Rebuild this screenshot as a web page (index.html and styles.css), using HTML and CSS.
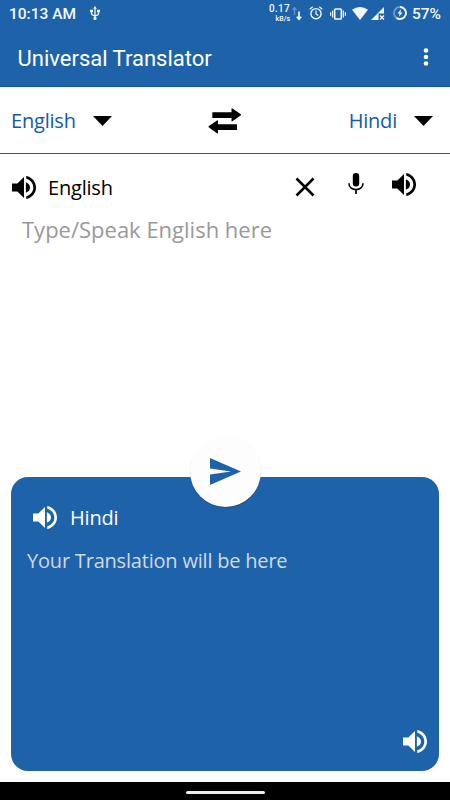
FILE: index.html
```
<!DOCTYPE html>
<html lang="en">
  <head>
    <meta charset="UTF-8" />
    <meta name="viewport" content="width=device-width, initial-scale=1.0" />
    <title>Universal Translator</title>
    <link rel="stylesheet" href="styles.css">
  </head>

  <body>
    <svg class="defs" width="0" height="0">
      <symbol id="speaker" viewBox="3 3.23 18 17.54" preserveAspectRatio="none">
        <path d="M3 9v6h4l5 5V4L7 9H3zm13.500 3c0-1.770-1.020-3.290-3.100-4.030v8.050c2.080-.73 3.100-2.250 3.100-4.020zM13.700 3.230v2.060c3.190.86 5.300 3.540 5.300 6.710s-2.110 5.850-5.300 6.710v2.060c4.310-.91 7.300-4.490 7.300-8.770s-2.990-7.860-7.300-8.770z" />
      </symbol>
    </svg>

    <div class="status-bar">
      <span class="time">10:13 AM</span>
      <svg class="usb" width="10" height="14" viewBox="0 0 10 14">
        <path class="line" d="M5 2v10M1.500 5v2.500q0 1.500 3.500 2.500M8.500 5v2.500q0 1.500-3.500 2.500" stroke="currentColor" stroke-width="1.300" />
        <path d="M5 0l1.800 2.700H3.200zM0 3.800h3v2.500H0zM7 3.800h3v2.500H7z" />
        <circle cx="5" cy="12.400" r="1.600" />
      </svg>
      <div class="speed">
        <span>0.17</span>
        <span class="unit">kB/s</span>
      </div>
      <svg class="arrows" width="10" height="16" viewBox="0 0 10 16">
        <path class="line" d="M2.500 9V2M.5 4l2-2.300 2 2.300" stroke="#5f8fc4" stroke-width="1.500" />
        <path class="line" d="M7 5.500v7M4.800 10.800l2.200 2.400 2.200-2.400" stroke="currentColor" stroke-width="1.700" />
      </svg>
      <svg class="alarm line" width="14" height="14" viewBox="0 0 14 14" stroke="currentColor">
        <circle cx="7" cy="7.700" r="5.100" stroke-width="1.400" />
        <path d="M7 4.500v3.500l2.300 1.400M.7 3.300L3.700.8M13.300 3.300l-3-2.500" stroke-width="1.200" />
      </svg>
      <svg class="vibrate line" width="16" height="12" viewBox="0 0 16 12" stroke="currentColor">
        <rect x="4.700" y="1" width="6.600" height="10" rx=".8" stroke-width="1.500" />
        <path d="M2.700 2.500v7M13.300 2.500v7M.6 4.300v3.400M15.400 4.300v3.400" stroke-width="1.200" />
      </svg>
      <svg class="wifi" width="16" height="13" viewBox="0 0 16 13">
        <path d="M0 2.800Q8-2.600 16 2.800L8 13z" />
      </svg>
      <svg class="signal" width="14" height="14" viewBox="0 0 14 14">
        <path d="M13 0v6.500H7.500V13H0z" />
        <path d="M9 8.500l4 4M13 8.500l-4 4" stroke="currentColor" stroke-width="1.400" />
      </svg>
      <svg class="battery" width="14" height="14" viewBox="0 0 14 14">
        <circle class="line" cx="7" cy="7" r="6" stroke="#6f9aca" stroke-width="1.800" />
        <path class="line" d="M7 1a6 6 0 1 1-3.500 10.900" stroke="currentColor" stroke-width="1.800" />
        <path d="M8 3.300L4.500 7.600h2L6 10.700l3.500-4.300h-2z" />
      </svg>
      <span class="percent">57%</span>
    </div>

    <header class="app-bar">
      <h1>Universal Translator</h1>
      <svg class="more" width="6" height="20" viewBox="0 0 6 20">
        <circle cx="3" cy="3.500" r="2.300" />
        <circle cx="3" cy="10" r="2.300" />
        <circle cx="3" cy="16.500" r="2.300" />
      </svg>
    </header>

    <div class="languages">
      <div class="select">
        <span>English</span>
        <svg width="19" height="10" viewBox="0 0 19 10"><path d="M0 0h19L9.500 10z" /></svg>
      </div>
      <svg class="swap" width="34" height="26" viewBox="0 0 34 26">
        <path d="M4.800 4.200h18.700V1q0-1.200 1-.5l8 5.500q1 .8 0 1.600l-8 5.600q-1 .6-1-.5V9.900H4.800q-.5 0-.5-.5V4.700q0-.5.5-.5zM28.500 16.200H10V13q0-1.200-1-.5L1 18q-1 .8 0 1.600l8 5.600q1 .6 1-.5v-2.800h18.500q.5 0 .5-.5v-4.700q0-.5-.5-.5z" />
      </svg>
      <div class="select">
        <span>Hindi</span>
        <svg width="19" height="10" viewBox="0 0 19 10"><path d="M0 0h19L9.500 10z" /></svg>
      </div>
    </div>

    <main class="source">
      <div class="source-head">
        <svg class="speaker"><use href="#speaker" /></svg>
        <span class="source-name">English</span>
        <svg class="clear" width="20" height="20" viewBox="0 0 20 20">
          <path d="M1.500 1.500l17 17M18.500 1.500l-17 17" stroke="#000" stroke-width="2.500" />
        </svg>
        <svg class="mic" width="16" height="22" viewBox="0 0 16 22">
          <rect x="4.800" y="0" width="6.400" height="13.500" rx="3.200" />
          <path class="line" d="M1 10.300c0 8.300 14 8.300 14 0M8 16.500V21" stroke="#000" stroke-width="1.700" />
        </svg>
        <svg class="speaker listen"><use href="#speaker" /></svg>
      </div>
      <p class="placeholder">Type/Speak English here</p>
    </main>

    <section class="result">
      <button class="send" aria-label="Translate">
        <svg width="31" height="27" viewBox="0 0 31 27"><path d="M0 0l31 13.500L0 27v-10.500l21-3L0 10.500z" /></svg>
      </button>
      <div class="result-head">
        <svg class="speaker"><use href="#speaker" /></svg>
        <span>Hindi</span>
      </div>
      <p class="result-text">Your Translation will be here</p>
      <svg class="speaker result-listen"><use href="#speaker" /></svg>
    </section>

    <footer class="nav-bar">
      <div class="handle"></div>
    </footer>
  </body>
</html>
```
FILE: styles.css
```
* {
  margin: 0;
  padding: 0;
  box-sizing: border-box;
}

body {
  width: 450px;
  height: 800px;
  display: flex;
  flex-direction: column;
  overflow: hidden;
  background-color: #fff;
  font-family: "Open Sans", "Noto Sans", sans-serif;
  color: #000;
}

svg {
  display: block;
  flex-shrink: 0;
  fill: currentColor;
}

.line {
  fill: none;
}

.defs {
  position: absolute;
}

.speaker {
  width: 24px;
  height: 23px;
}

/* Status bar */
.status-bar {
  height: 28px;
  padding: 0 9px;
  display: flex;
  align-items: center;
  background-color: #1e63aa;
  color: #f4f8fc;
  font-family: Roboto, sans-serif;
  font-weight: 500;
}

.time {
  width: 67px;
  font-size: 15.5px;
  white-space: nowrap;
}

.usb {
  margin-left: 14px;
  margin-top: -2px;
}

.speed {
  width: 22px;
  margin-left: auto;
  margin-top: -2px;
  display: flex;
  flex-direction: column;
  align-items: flex-end;
  font-size: 10px;
  letter-spacing: 0.3px;
  line-height: 12px;
}

.unit {
  font-size: 7px;
  letter-spacing: 0;
  line-height: 9px;
}

.arrows {
  margin-left: 2px;
}

.alarm {
  margin-left: 7px;
  margin-top: -2px;
}

.vibrate {
  margin-left: 7px;
  margin-top: -1px;
}

.wifi {
  margin-left: 6px;
  margin-top: -2px;
}

.signal {
  margin-left: 3px;
  margin-top: -1px;
}

.battery {
  margin-left: 8px;
  margin-top: -2px;
}

.percent {
  width: 29px;
  margin-left: 5px;
  font-size: 15.5px;
}

/* App bar */
.app-bar {
  height: 59px;
  padding: 0 21px 0 17.5px;
  display: flex;
  align-items: center;
  justify-content: space-between;
  background-color: #1e63aa;
  border-bottom: 1px solid #0f57a3;
  color: #fff;
}

.app-bar h1 {
  padding-top: 2px;
  font-family: Roboto, sans-serif;
  font-size: 22px;
  font-weight: 400;
}

.more {
  margin-top: -1px;
}

/* Language picker */
.languages {
  height: 67px;
  padding: 0 17px 0 11px;
  display: flex;
  align-items: center;
  justify-content: space-between;
  border-bottom: 1px solid #555;
}

.select {
  display: flex;
  align-items: center;
  gap: 17px;
}

.select span {
  color: #1459ac;
  font-size: 20px;
  letter-spacing: -0.2px;
}

.select svg {
  margin-top: 2px;
}

.swap {
  margin-top: 1px;
  margin-right: 11px;
}

/* Source text */
.source {
  flex: 1;
}

.source-head {
  height: 54px;
  padding: 12px 34px 0 12px;
  display: flex;
  align-items: center;
}

.source-name {
  margin-left: 12px;
  margin-right: auto;
  font-size: 20px;
  letter-spacing: -0.2px;
}

.mic {
  margin: -7px 28px 0 33px;
}

.listen {
  margin-top: -6px;
}

.placeholder {
  padding-left: 22px;
  font-size: 22px;
  line-height: 42px;
  color: #999;
}

/* Translation card */
.result {
  position: relative;
  height: 294px;
  margin: 0 11px 11px;
  padding: 28px 12px 18px 22px;
  display: flex;
  flex-direction: column;
  background-color: #1e63aa;
  border-radius: 17px;
  color: #fff;
}

/* Send button sits across the top edge of the card */
.send {
  position: absolute;
  top: -41px;
  left: 179px;
  width: 71px;
  height: 71px;
  display: flex;
  align-items: center;
  justify-content: center;
  border: none;
  border-radius: 50%;
  background-color: #fdfdfd;
  box-shadow: 0 1px 1px rgba(0, 0, 0, 0.22);
  color: #1e63aa;
}

.result-head {
  display: flex;
  align-items: center;
  gap: 13px;
  height: 25px;
  font-size: 20px;
  letter-spacing: -0.2px;
}

.result-text {
  margin: 16px 0 0 -6px;
  font-size: 20px;
  letter-spacing: -0.2px;
  line-height: 29px;
  color: #d0dae5;
}

.result-listen {
  margin-top: auto;
  align-self: flex-end;
}

/* Bottom navigation */
.nav-bar {
  height: 18px;
  display: flex;
  justify-content: center;
  align-items: center;
  background-color: #000;
}

.handle {
  width: 79px;
  height: 3px;
  margin-top: 2px;
  border-radius: 2px;
  background-color: #eee;
}
```
